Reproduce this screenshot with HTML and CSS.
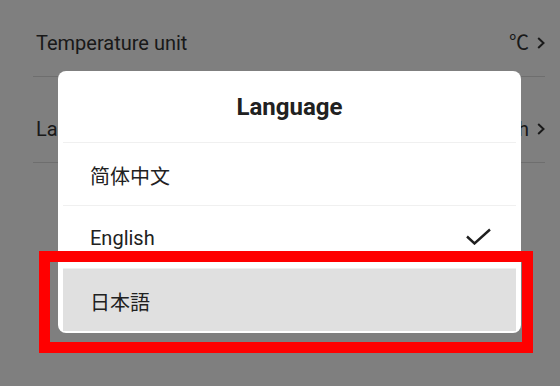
FILE: index.html
```html
<!DOCTYPE html>
<html lang="en">
<head>
    <meta charset="UTF-8">
    <meta name="viewport" content="width=device-width, initial-scale=1.0">
    <title>Settings - Language</title>
    <link rel="stylesheet" href="styles.css">
</head>
<body>
    <div class="settings-list">
        <div class="settings-row first">
            <span class="row-label">Temperature unit</span>
            <span class="row-value">℃
                <svg class="chevron" width="8" height="12" viewBox="0 0 8 12"><path d="M1.2 1 L6.5 6 L1.2 11" fill="none" stroke="currentColor" stroke-width="2"/></svg>
            </span>
        </div>
        <div class="settings-row">
            <span class="row-label">Language</span>
            <span class="row-value">English
                <svg class="chevron" width="8" height="12" viewBox="0 0 8 12"><path d="M1.2 1 L6.5 6 L1.2 11" fill="none" stroke="currentColor" stroke-width="2"/></svg>
            </span>
        </div>
    </div>

    <div class="overlay">
        <div class="dialog">
            <div class="dialog-title">Language</div>
            <div class="option" lang="zh-Hans">简体中文</div>
            <div class="option selected">
                <span>English</span>
                <svg class="check" width="25" height="17" viewBox="0 0 25 17"><path d="M1 8.5 L8.5 15.5 L24 1.5" fill="none" stroke="#1f1f1f" stroke-width="2.4"/></svg>
            </div>
            <div class="option active" lang="ja">日本語</div>
        </div>
    </div>

    <!-- highlight frame around the focused option -->
    <div class="highlight-frame"></div>
</body>
</html>
```

FILE: styles.css
```css
:root {
    --text-color: #333;
    --dialog-text: #212121;
    --divider: #dcdcdc;
    --dialog-divider: #f0f0f0;
}

body {
    margin: 0;
    font-family: Roboto, "Noto Sans CJK SC", sans-serif;
    background: #fff;
    color: var(--text-color);
    width: 560px;
    height: 386px;
    overflow: hidden;
}

.settings-list {
    padding: 0 15px 0 33px;
}

.settings-row {
    display: flex;
    justify-content: space-between;
    align-items: center;
    padding: 40px 0 21px;
    line-height: 24px;
    font-size: 20px;
    border-bottom: 1px solid var(--divider);
}

.settings-row.first {
    padding-top: 31px;
}

.row-label {
    padding-left: 3px;
}

.row-value {
    display: flex;
    align-items: center;
    gap: 8px;
}

.overlay {
    position: fixed;
    inset: 0;
    background: rgba(0, 0, 0, 0.5);
    padding: 71px 39px 0 58px;
}

.dialog {
    background: #fff;
    border-radius: 8px;
    padding: 0 5px 2px;
    color: var(--dialog-text);
}

.dialog-title {
    height: 69px;
    padding-top: 2px;
    line-height: 69px;
    text-align: center;
    font-size: 24px;
    font-weight: 700;
    border-bottom: 1px solid var(--dialog-divider);
}

.option {
    display: flex;
    justify-content: space-between;
    align-items: center;
    height: 60px;
    padding: 2px 25px 0 27px;
    font-size: 20px;
    border-bottom: 1px solid var(--dialog-divider);
}

.option:lang(ja) {
    font-family: Roboto, "Noto Sans CJK JP", sans-serif;
}

.option.active {
    background: #e0e0e0;
    border-bottom: none;
}

.check {
    margin-top: -4px;
}

.highlight-frame {
    position: absolute;
    left: 39px;
    top: 251px;
    width: 472px;
    height: 80px;
    border: 11px solid #ff0000;
}
```
